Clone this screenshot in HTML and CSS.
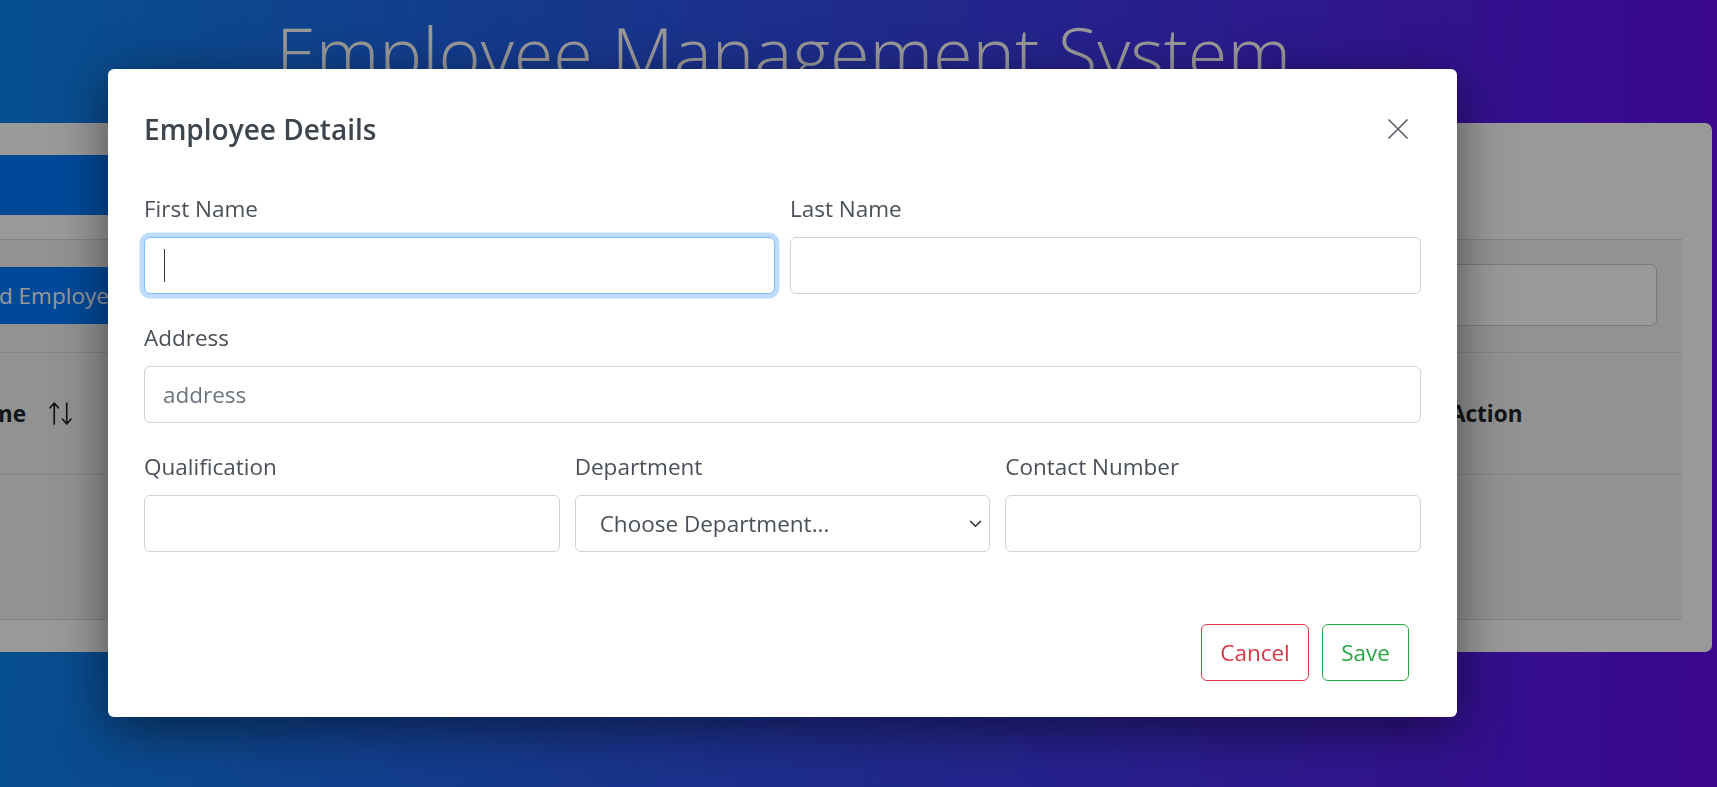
FILE: index.html
```html
<!DOCTYPE html>
<html lang="en">
<head>
<meta charset="utf-8">
<title>Employee Management System</title>
<link rel="stylesheet" href="styles.css">
</head>
<body>
<div class="page">
  <h1 class="app-title">Employee Management System</h1>
  <div class="card">
    <div class="card-top"><div class="list-tab"></div></div>
    <div class="table-wrap">
      <div class="toolbar">
        <button class="btn-add" type="button">Add Employee</button>
        <div class="search"></div>
      </div>
      <div class="thead">
        <div class="th th-name">
          <span>First Name</span>
          <svg class="sort-icon" viewBox="0 0 24 24" width="25" height="25" aria-hidden="true">
            <path d="M6 22V2M2 6.5L6 2l4 4.5M18 2v20M14 17.5l4 4.5 4-4.5" fill="none" stroke="currentColor" stroke-width="1.6" stroke-linecap="round" stroke-linejoin="round"/>
          </svg>
        </div>
        <div class="th th-action">Action</div>
      </div>
      <div class="tbody"></div>
    </div>
  </div>
</div>

<div class="backdrop"></div>

<div class="modal">
  <div class="modal-header">
    <h5 class="modal-title">Employee Details</h5>
    <button class="close" type="button" aria-label="Close">
      <svg viewBox="0 0 20 20" width="20" height="20" aria-hidden="true">
        <path d="M1 1L19 19M19 1L1 19" fill="none" stroke="currentColor" stroke-width="1.7" stroke-linecap="round"/>
      </svg>
    </button>
  </div>
  <form class="modal-body">
    <div class="row two">
      <div class="group">
        <label>First Name</label>
        <div class="focus-wrap">
          <input class="control focused" type="text">
          <span class="caret"></span>
        </div>
      </div>
      <div class="group">
        <label>Last Name</label>
        <input class="control" type="text">
      </div>
    </div>
    <div class="group">
      <label>Address</label>
      <input class="control" type="text" placeholder="address">
    </div>
    <div class="row three">
      <div class="group">
        <label>Qualification</label>
        <input class="control" type="text">
      </div>
      <div class="group">
        <label>Department</label>
        <div class="select-wrap">
          <select class="control select">
            <option>Choose Department...</option>
          </select>
          <svg class="chev" viewBox="0 0 14 9" width="13" height="8" aria-hidden="true">
            <path d="M1.5 1.5L7 7l5.5-5.5" fill="none" stroke="currentColor" stroke-width="1.8" stroke-linecap="round" stroke-linejoin="round"/>
          </svg>
        </div>
      </div>
      <div class="group">
        <label>Contact Number</label>
        <input class="control" type="text">
      </div>
    </div>
  </form>
  <div class="modal-footer">
    <button class="btn btn-cancel" type="button">Cancel</button>
    <button class="btn btn-save" type="button">Save</button>
  </div>
</div>
</body>
</html>
```

FILE: styles.css
```css
* {
  box-sizing: border-box;
}

html, body {
  margin: 0;
  padding: 0;
}

body {
  width: 1717px;
  height: 787px;
  overflow: hidden;
  position: relative;
  font-family: "Open Sans", "Noto Sans", sans-serif;
  background: linear-gradient(92deg, #0c86ee 0%, #3547e8 50%, #630bed 100%);
}

/* ---------- page behind the modal ---------- */
.page {
  padding-top: 2px;
}

.app-title {
  margin: 0;
  height: 100px;
  line-height: 100px;
  font-size: 72px;
  font-weight: 300;
  color: #ffffff;
  text-align: center;
  padding-right: 150px;
  white-space: nowrap;
}

.card {
  margin-top: 21px;
  margin-left: -140px;
  width: 1852px;
  height: 529px;
  background: #ffffff;
  border-radius: 7px;
  padding: 0 30px 32px 30px;
  display: flex;
  flex-direction: column;
}

.card-top {
  padding-top: 32px;
  margin-bottom: 24px;
}

.list-tab {
  width: 420px;
  height: 60px;
  background: #007bff;
  border-radius: 6px;
}

.table-wrap {
  flex: 1;
  background: #f3f3f3;
  display: flex;
  flex-direction: column;
}

.toolbar {
  height: 113px;
  border-top: 1px solid #dcdcdc;
  display: flex;
  justify-content: space-between;
  align-items: flex-start;
  padding: 24px 25px 0 63px;
}

.btn-add {
  margin-top: 3px;
  height: 57px;
  padding: 0 18px;
  border: none;
  border-radius: 6px;
  background: #007bff;
  color: #ffffff;
  font-family: inherit;
  font-size: 22.5px;
  width: 420px;
  text-align: left;
}

.search {
  width: 420px;
  height: 62px;
  background: #ffffff;
  border: 1px solid #c9ced3;
  border-radius: 6px;
}

.thead {
  height: 122px;
  border-top: 1px solid #dcdcdc;
  display: flex;
  justify-content: space-between;
  align-items: center;
  font-weight: 700;
  font-size: 22.5px;
  color: #212529;
}

.th-name {
  width: 183px;
  display: flex;
  justify-content: flex-end;
  align-items: center;
  gap: 22px;
  white-space: nowrap;
}

.sort-icon {
  color: #212529;
  flex: none;
}

.th-action {
  width: 232px;
}

.tbody {
  height: 146px;
  border-top: 1px solid #dcdcdc;
  border-bottom: 1px solid #dcdcdc;
}

.backdrop {
  position: fixed;
  inset: 0;
  background: rgba(0, 0, 0, 0.4);
}

/* ---------- modal ---------- */
.modal {
  position: absolute;
  left: 108px;
  top: 69px;
  width: 1349px;
  background: #ffffff;
  border-radius: 6px;
  padding: 0 36px;
  box-shadow: 0 12px 50px rgba(0, 0, 0, 0.5);
  color: #495057;
}

.modal-header {
  padding-top: 38px;
  height: 82px;
  display: flex;
  justify-content: space-between;
  align-items: center;
}

.modal-title {
  margin: 0;
  font-size: 28px;
  font-weight: 600;
  line-height: 45px;
  color: #3f454c;
}

.close {
  margin-right: 13px;
  width: 20px;
  height: 20px;
  padding: 0;
  border: none;
  background: none;
  color: #5b6269;
  display: flex;
}

.modal-body {
  margin: 38px 0 0 0;
}

.row {
  display: grid;
  gap: 15px;
}

.row.two {
  grid-template-columns: 1fr 1fr;
}

.row.three {
  grid-template-columns: 1fr 1fr 1fr;
}

.group {
  margin-bottom: 24px;
}

.group label {
  display: block;
  font-size: 22.5px;
  line-height: 36px;
  padding-top: 2px;
  margin-bottom: 10px;
  color: #495057;
}

.control {
  display: block;
  width: 100%;
  height: 57px;
  padding: 0 18px;
  border: 1px solid #ced4da;
  border-radius: 6px;
  background: #ffffff;
  font-family: inherit;
  font-size: 22.5px;
  color: #495057;
  outline: none;
}

.control::placeholder {
  color: #6c757d;
}

.focus-wrap {
  position: relative;
}

.control.focused {
  border-color: #80bdff;
  box-shadow: 0 0 0 4.5px rgba(0, 123, 255, 0.25);
}

.caret {
  position: absolute;
  left: 20px;
  top: 12px;
  width: 1px;
  height: 33px;
  background: #333a40;
}

.select-wrap {
  position: relative;
}

.select {
  appearance: none;
  -webkit-appearance: none;
  padding: 0 40px 0 24px;
}

.chev {
  position: absolute;
  right: 8px;
  top: 25px;
  color: #343a40;
}

.modal-footer {
  padding: 48px 12px 36px 0;
  display: flex;
  justify-content: flex-end;
  gap: 13px;
}

.btn {
  height: 57px;
  padding: 0;
  border-radius: 6px;
  background: #ffffff;
  font-family: inherit;
  font-size: 22.5px;
  text-align: center;
}

.btn-cancel {
  width: 108px;
  border: 1px solid #dc3545;
  color: #dc3545;
}

.btn-save {
  width: 87px;
  border: 1px solid #28a745;
  color: #28a745;
}
```
